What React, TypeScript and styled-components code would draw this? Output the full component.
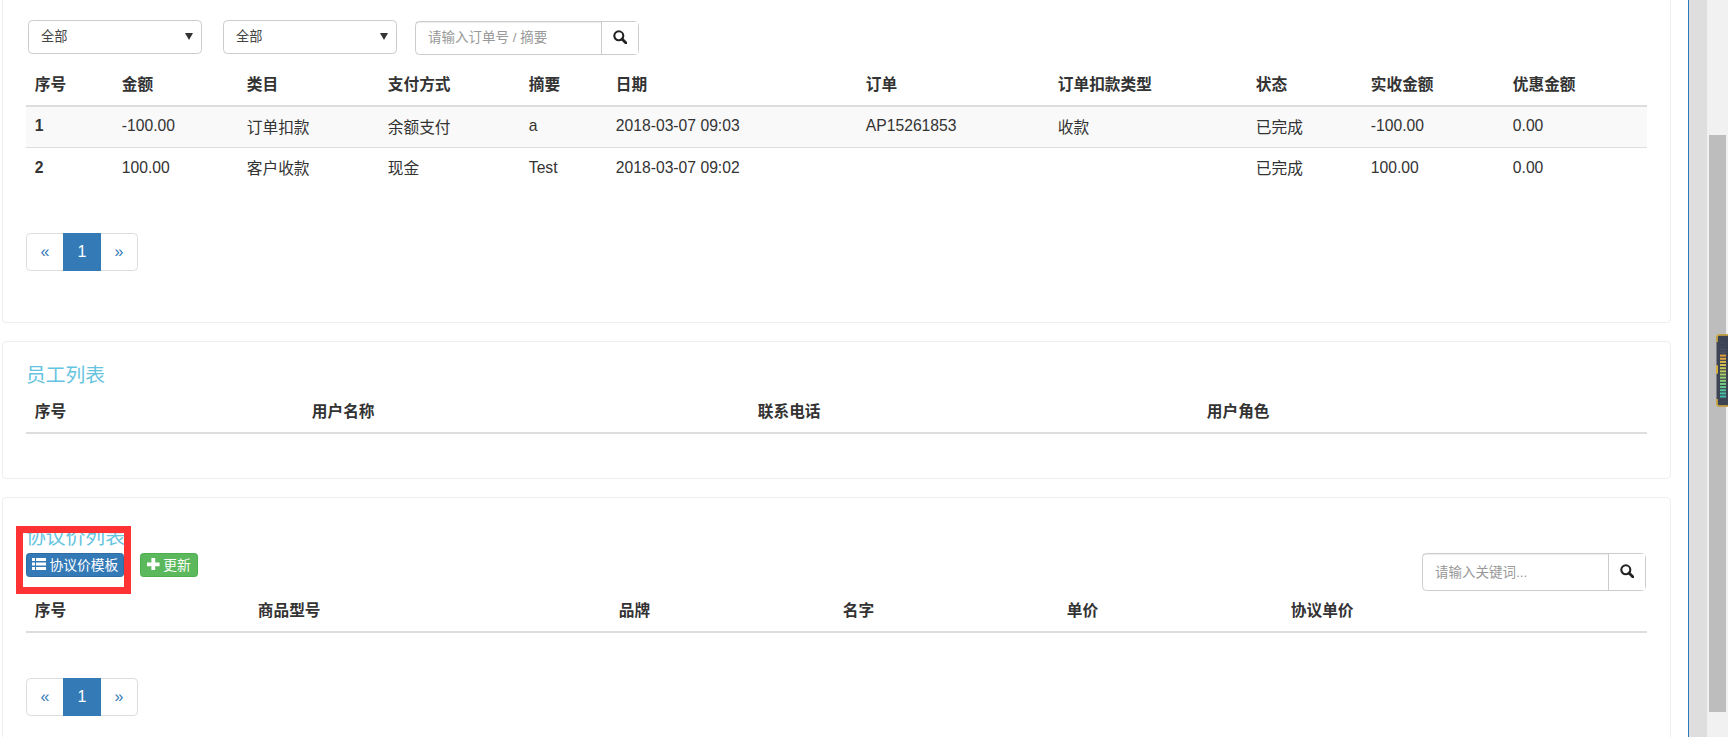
import React from "react";
import styled, { createGlobalStyle } from "styled-components";

const Global = createGlobalStyle`
  html, body { margin: 0; padding: 0; background: #fff; height: 100%; overflow: hidden; }
  * { box-sizing: border-box; }
  body { font-family: "Liberation Sans", "Noto Sans CJK SC", sans-serif; font-size: 15.7px; color: #333; }
`;

const Page = styled.div`
  display: flex;
  width: 1728px;
  height: 737px;
  overflow: hidden;
  position: relative;
`;
const Main = styled.main`
  width: 1688px;
  flex: none;
  padding: 0 17px 0 2px;
  display: flex;
  flex-direction: column;
  gap: 18px;
`;
const Rail = styled.div`
  width: 19px;
  flex: none;
  background: #dedede;
  border-left: 1.5px solid #2a78bd;
`;
const Track = styled.div`
  flex: 1;
  background: #f1f1f1;
  padding: 135px 2px 25px 2px;
  display: flex;
`;
const Thumb = styled.div`
  flex: 1;
  background: #bdbdbd;
`;
const Gauge = styled.svg`
  position: absolute;
  right: 0;
  top: 334px;
  width: 12px;
  height: 73px;
`;
const Card = styled.section<{ $open?: boolean; $h: number }>`
  position: relative;
  flex: none;
  height: ${(p) => p.$h}px;
  background: #fff;
  border: 1.1px solid #eee;
  border-top: ${(p) => (p.$open ? "none" : "1.1px solid #eee")};
  border-radius: ${(p) => (p.$open ? "0 0 4px 4px" : "4px")};
  padding: 0 23px;
`;
const Filters = styled.div`
  display: flex;
  padding: 20px 0 0 2px;
  height: 65px;
  align-items: flex-start;
`;
const SelectWrap = styled.div`
  position: relative;
  width: 174px;
  height: 33.5px;
  margin-right: 21px;
  &:nth-child(2) { margin-right: 18px; }
  &::after {
    content: "";
    position: absolute;
    right: 9px;
    top: 13px;
    border-left: 4px solid transparent;
    border-right: 4px solid transparent;
    border-top: 7px solid #333;
  }
`;
const Select = styled.select`
  appearance: none;
  width: 100%;
  height: 100%;
  background: #fff;
  border: 1.1px solid #ccc;
  border-radius: 4.4px;
  padding: 0 12px;
  font: 13.2px "Liberation Sans", "Noto Sans CJK SC", sans-serif;
  color: #444;
`;
const SearchGroup = styled.div<{ $w: number; $h: number; $top?: number; $right?: number }>`
  display: flex;
  flex: none;
  width: ${(p) => p.$w}px;
  height: ${(p) => p.$h}px;
  margin-top: ${(p) => p.$top ?? 0}px;
  margin-right: ${(p) => p.$right ?? 0}px;
  border: 1.1px solid #ccc;
  border-radius: 4.4px;
  background: #fff;
`;
const SearchInput = styled.input`
  flex: 1;
  min-width: 0;
  border: none;
  outline: none;
  background: transparent;
  padding: 0 12px;
  font: 13.5px "Liberation Sans", "Noto Sans CJK SC", sans-serif;
  box-shadow: inset 0 1px 1px rgba(0, 0, 0, 0.075);
  &::placeholder { color: #999; opacity: 1; }
`;
const SearchButton = styled.button`
  flex: none;
  width: 37px;
  border: none;
  border-left: 1.1px solid #ccc;
  background: #fff;
  padding: 0 0 2px;
  display: flex;
  align-items: center;
  justify-content: center;
  color: #222;
`;
const Table = styled.table`
  width: 100%;
  table-layout: fixed;
  border-collapse: separate;
  border-spacing: 0;
`;
const Col = styled.col<{ $w: number }>`
  width: ${(p) => p.$w}px;
`;
const Th = styled.th`
  height: 42px;
  padding: 0 8.8px 4px;
  text-align: left;
  font-weight: 700;
  border-bottom: 2.2px solid #ddd;
`;
const Td = styled.td<{ $strong?: boolean; $striped?: boolean }>`
  height: 41px;
  padding: 0 8.8px 2px;
  font-weight: ${(p) => (p.$strong ? 700 : 400)};
  background: ${(p) => (p.$striped ? "#f9f9f9" : "#fff")};
  border-bottom: ${(p) => (p.$striped ? "1.1px solid #ddd" : "none")};
`;
const Pager = styled.nav<{ $top: number }>`
  display: inline-flex;
  margin-top: ${(p) => p.$top}px;
  height: 38px;
  border: 1.1px solid #ddd;
  border-radius: 4.4px;
`;
const PageLink = styled.a<{ $active?: boolean }>`
  width: ${(p) => (p.$active ? "38px" : "36px")};
  display: flex;
  align-items: center;
  justify-content: center;
  margin: ${(p) => (p.$active ? "-1.1px 0" : "0")};
  color: ${(p) => (p.$active ? "#fff" : "#337ab7")};
  background: ${(p) => (p.$active ? "#337ab7" : "transparent")};
  font-size: 16px;
`;
const Title = styled.h3<{ $top: number; $bottom: number }>`
  margin: 0;
  padding: ${(p) => p.$top}px 0 ${(p) => p.$bottom}px;
  line-height: 28px;
  font-size: 19.8px;
  font-weight: 400;
  color: #66c4e0;
`;
const Toolbar = styled.div`
  display: flex;
  align-items: flex-start;
  margin-top: 2px;
  height: 38px;
`;
const Btn = styled.button<{ $bg: string; $w: number }>`
  display: inline-flex;
  align-items: center;
  justify-content: center;
  gap: 3.5px;
  width: ${(p) => p.$w}px;
  height: 24px;
  margin-right: 16px;
  padding: 0 0 2px;
  border: 1px solid ${(p) => (p.$bg === "#337ab7" ? "#2e6da4" : "#4cae4c")};
  border-radius: 3.3px;
  background: ${(p) => p.$bg};
  color: #fff;
  font: 13.8px "Liberation Sans", "Noto Sans CJK SC", sans-serif;
  svg { flex: none; }
`;
const Spacer = styled.div`
  flex: 1;
`;
const Highlight = styled.div`
  position: absolute;
  left: 13px;
  top: 28px;
  width: 115px;
  height: 68px;
  border: 7px solid #ff3333;
  pointer-events: none;
`;

const SearchIcon = () => (
  <svg width="14" height="14" viewBox="0 0 14 14" aria-hidden="true">
    <circle cx="5.8" cy="5.8" r="4.5" fill="none" stroke="currentColor" strokeWidth="2.1" />
    <path d="M9 9l4 4" fill="none" stroke="currentColor" strokeWidth="2.8" strokeLinecap="round" />
  </svg>
);
const ListIcon = () => (
  <svg width="14.3" height="12" viewBox="0 0 14.3 12" fill="currentColor" aria-hidden="true">
    <rect x="0" y="0" width="3" height="3" />
    <rect x="4" y="0" width="10.3" height="3" />
    <rect x="0" y="4.5" width="3" height="3" />
    <rect x="4" y="4.5" width="10.3" height="3" />
    <rect x="0" y="9" width="3" height="3" />
    <rect x="4" y="9" width="10.3" height="3" />
  </svg>
);
const PlusIcon = () => (
  <svg width="12.6" height="12.6" viewBox="0 0 12.6 12.6" fill="currentColor" aria-hidden="true">
    <path d="M4.4 0h3.8v4.4h4.4v3.8H8.2v4.4H4.4V8.2H0V4.4h4.4z" />
  </svg>
);

const Head = ({ cols, labels }: { cols: number[]; labels: string[] }) => (
  <>
    <colgroup>
      {cols.map((w, i) => (
        <Col key={i} $w={w} />
      ))}
    </colgroup>
    <thead>
      <tr>
        {labels.map((l) => (
          <Th key={l}>{l}</Th>
        ))}
      </tr>
    </thead>
  </>
);

const Pagination = ({ top }: { top: number }) => (
  <Pager $top={top}>
    <PageLink>«</PageLink>
    <PageLink $active>1</PageLink>
    <PageLink>»</PageLink>
  </Pager>
);

const Search = ({ w, h, top, right, placeholder }: { w: number; h: number; top?: number; right?: number; placeholder: string }) => (
  <SearchGroup $w={w} $h={h} $top={top} $right={right}>
    <SearchInput placeholder={placeholder} />
    <SearchButton aria-label="搜索">
      <SearchIcon />
    </SearchButton>
  </SearchGroup>
);

const rows = [
  ["1", "-100.00", "订单扣款", "余额支付", "a", "2018-03-07 09:03", "AP15261853", "收款", "已完成", "-100.00", "0.00"],
  ["2", "100.00", "客户收款", "现金", "Test", "2018-03-07 09:02", "", "", "已完成", "100.00", "0.00"],
];

const gaugeColors = ["#3f4858", "#3f4858", "#465060", "#465060", "#e0a040", "#e0a840", "#d8b848", "#d4c050", "#c8c858", "#b8cc60", "#a8d068", "#98d070", "#88d078", "#70cc80", "#60c88c", "#50c498", "#48c0a0", "#40bca8"];

export default function App() {
  return (
    <Page>
      <Global />
      <Main>
        <Card $open $h={323}>
          <Filters>
            <SelectWrap>
              <Select defaultValue="all">
                <option value="all">全部</option>
              </Select>
            </SelectWrap>
            <SelectWrap>
              <Select defaultValue="all">
                <option value="all">全部</option>
              </Select>
            </SelectWrap>
            <Search w={224} h={33.5} top={1} placeholder="请输入订单号 / 摘要" />
          </Filters>
          <Table>
            <Head
              cols={[87, 125, 141, 141, 87, 250, 192, 198, 115, 142, 143]}
              labels={["序号", "金额", "类目", "支付方式", "摘要", "日期", "订单", "订单扣款类型", "状态", "实收金额", "优惠金额"]}
            />
            <tbody>
              {rows.map((r, ri) => (
                <tr key={ri}>
                  {r.map((c, ci) => (
                    <Td key={ci} $strong={ci === 0} $striped={ri === 0}>
                      {c}
                    </Td>
                  ))}
                </tr>
              ))}
            </tbody>
          </Table>
          <Pagination top={44} />
        </Card>

        <Card $h={138}>
          <Title $top={19} $bottom={3}>员工列表</Title>
          <Table>
            <Head cols={[277, 446, 449, 449]} labels={["序号", "用户名称", "联系电话", "用户角色"]} />
          </Table>
        </Card>

        <Card $h={260}>
          <Title $top={25} $bottom={0}>协议价列表</Title>
          <Toolbar>
            <Btn $bg="#337ab7" $w={98}>
              <ListIcon />
              协议价模板
            </Btn>
            <Btn $bg="#5cb85c" $w={58}>
              <PlusIcon />
              更新
            </Btn>
            <Spacer />
            <Search w={224} h={38} right={1} placeholder="请输入关键词..." />
          </Toolbar>
          <Table>
            <Head
              cols={[223, 361, 224, 224, 224, 365]}
              labels={["序号", "商品型号", "品牌", "名字", "单价", "协议单价"]}
            />
          </Table>
          <Pagination top={45} />
          <Highlight />
        </Card>
      </Main>
      <Rail />
      <Track>
        <Thumb />
      </Track>
      <Gauge viewBox="0 0 12 73" aria-hidden="true">
        <rect x="0.5" y="0.5" width="14" height="72" rx="2.5" fill="#3c4352" />
        <path d="M1 8V3a2 2 0 0 1 2-2h9M1 65v5a2 2 0 0 0 2 2h9" fill="none" stroke="#d8ad3f" strokeWidth="1.6" />
        <rect x="0" y="31" width="2" height="9" rx="1" fill="#d8ad3f" />
        {gaugeColors.map((color, i) => (
          <rect key={i} x="4" y={8 + i * 3.15} width="6" height="2" fill={color} />
        ))}
      </Gauge>
    </Page>
  );
}
